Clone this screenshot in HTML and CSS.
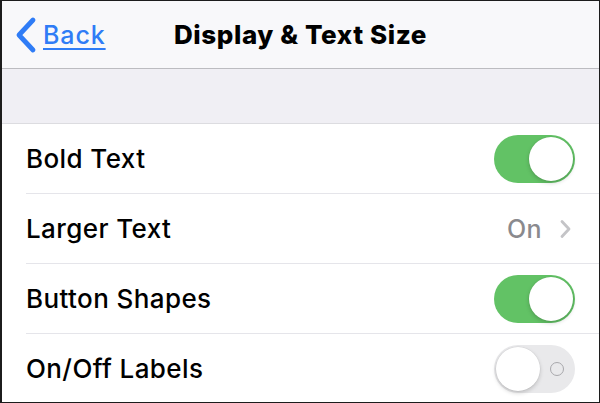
FILE: index.html
```html
<!DOCTYPE html>
<html>
<head>
<meta charset="utf-8">
<link rel="stylesheet" href="styles.css">
</head>
<body>
<div class="screen">
  <header class="nav">
    <a class="back" href="#">
      <svg class="chev" width="26" height="38" viewBox="0 0 26 38"><path d="M21 4 L7 19 L21 34" fill="none" stroke="#2f7cf6" stroke-width="4.8" stroke-linecap="round" stroke-linejoin="round"/></svg>
      <span class="back-label">Back</span>
    </a>
    <h1 class="title">Display &amp; Text Size</h1>
  </header>
  <div class="gap"></div>
  <ul class="list">
    <li class="row">
      <span class="label">Bold Text</span>
      <span class="toggle on"><span class="knob"></span></span>
    </li>
    <li class="row">
      <span class="label">Larger Text</span>
      <span class="detail">On
        <svg class="disc" width="14" height="22" viewBox="0 0 14 22"><path d="M4 3.5 L11 11 L4 18.5" fill="none" stroke="#c4c4c7" stroke-width="2.8" stroke-linecap="round" stroke-linejoin="round"/></svg>
      </span>
    </li>
    <li class="row">
      <span class="label">Button Shapes</span>
      <span class="toggle on"><span class="knob"></span></span>
    </li>
    <li class="row">
      <span class="label">On/Off Labels</span>
      <span class="toggle off"><span class="knob"></span><span class="ring"></span></span>
    </li>
  </ul>
</div>
</body>
</html>
```
FILE: styles.css
```css
* { box-sizing: border-box; }
html, body { margin: 0; padding: 0; }
body {
  width: 600px;
  height: 403px;
  overflow: hidden;
  font-family: "Inter", "Liberation Sans", sans-serif;
  background: #fff;
}
.screen {
  width: 600px;
  height: 403px;
  border: 1px solid #1c1c1c;
  border-left-width: 2px;
  overflow: hidden;
  background: #fff;
}
.nav {
  height: 68px;
  background: #f8f8fa;
  border-bottom: 1px solid #bcbcc0;
  display: flex;
  align-items: center;
  position: relative;
}
.back {
  display: flex;
  align-items: center;
  gap: 5px;
  margin-left: 10px;
  color: #2f7cf6;
  text-decoration: none;
  position: relative;
  z-index: 1;
}
.back-label {
  font-size: 25px;
  font-weight: 500;
  text-decoration: underline;
  text-decoration-thickness: 2px;
  text-underline-offset: 4px;
  letter-spacing: 0.9px;
}
.title {
  position: absolute;
  left: 0;
  right: 0;
  margin: 0;
  text-align: center;
  font-size: 26px;
  font-weight: 800;
  color: #000;
  letter-spacing: 0.6px;
}
.gap {
  height: 55px;
  background: #f0eff4;
  border-bottom: 1px solid #dcdce0;
}
.list {
  list-style: none;
  margin: 0;
  padding: 0 0 0 24px;
}
.row {
  height: 70px;
  display: flex;
  align-items: center;
  justify-content: space-between;
  border-bottom: 1px solid #e5e5ea;
  padding-right: 24px;
}
.label {
  font-size: 26px;
  font-weight: 500;
  color: #000;
  letter-spacing: 0.4px;
}
.detail {
  display: flex;
  align-items: center;
  gap: 16px;
  font-size: 25px;
  font-weight: 500;
  color: #8a8a8e;
  margin-right: 3px;
  letter-spacing: 0.4px;
}
.toggle {
  width: 81px;
  height: 48px;
  border-radius: 24px;
  position: relative;
  display: block;
}
.toggle.on { background: #62c265; }
.toggle.off { background: #e9e9eb; }
.knob {
  position: absolute;
  top: 2px;
  width: 44px;
  height: 44px;
  border-radius: 50%;
  background: #fff;
  box-shadow: 0 2px 4px rgba(0,0,0,0.18), 0 0 0 0.5px rgba(0,0,0,0.06);
}
.toggle.on .knob { right: 2px; }
.toggle.off .knob { left: 2px; }
.ring {
  position: absolute;
  right: 11px;
  top: 17px;
  width: 14px;
  height: 14px;
  border-radius: 50%;
  border: 1.5px solid #a8a8ac;
}
```
